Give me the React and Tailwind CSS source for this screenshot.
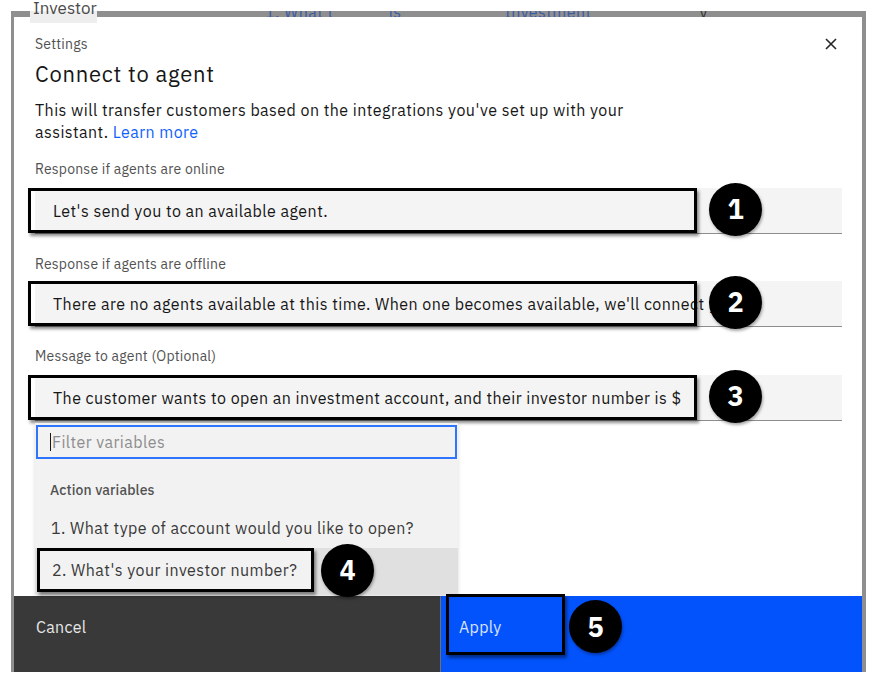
import React from "react";

const FONT = { fontFamily: '"IBM Plex Sans", "Liberation Sans", Arial, sans-serif' };

function Badge({ n, className }) {
  return (
    <div
      className={
        "absolute w-[53px] h-[53px] rounded-full bg-black text-white flex items-center justify-center text-[27px] font-bold tracking-normal shadow-[1px_2px_3px_rgba(0,0,0,0.35)] " +
        className
      }
    >
      {n}
    </div>
  );
}

function Field({ label, text, n, labelGap, topGap }) {
  return (
    <div className={topGap}>
      <div className="text-[14px] leading-[16px] tracking-[0.2px] text-[#525252]">{label}</div>
      <div className={"relative " + labelGap}>
        <div className="h-[46px] bg-[#f4f4f4] border-b border-[#8d8d8d] flex items-center pl-[18px] overflow-hidden whitespace-nowrap text-[16px] text-[#161616]">
          {text}
        </div>
        <div className="absolute left-[-7px] top-0 w-[669px] h-[45px] border-[3px] border-black shadow-[2px_3px_3px_rgba(0,0,0,0.45)]" />
        <Badge n={n} className="left-[674px] top-[-5px]" />
      </div>
    </div>
  );
}

export default function App() {
  return (
    <div className="relative w-[876px] h-[682px] bg-white overflow-hidden tracking-[0.45px]" style={FONT}>
      <div className="h-[11px]" />
      <div className="ml-[11px] w-[855px] h-[661px] bg-[#8f8f8f] pl-[3px] pr-[4px] flex flex-col">
        {/* faded page content behind the dialog */}
        <div className="h-[6px] overflow-hidden flex items-start text-[16px] leading-[20px] text-[#3b5ba5]">
          <span className="ml-[251px] mt-[-9px]">1. What t</span>
          <span className="ml-[55px] mt-[-9px]">is</span>
          <span className="ml-[103px] mt-[-9px]">Investment</span>
          <span className="ml-[108px] mt-[-9px] text-[#393939]">v</span>
        </div>
        <div className="flex-1 bg-white flex flex-col">
          {/* body */}
          <div className="h-[579px] pl-[21px] pr-[20px] relative">
            <div className="flex items-start justify-between mt-[18px]">
              <div className="text-[14px] leading-[18px] tracking-[0.2px] text-[#525252]">Settings</div>
              <svg width="14" height="14" viewBox="0 0 14 14" className="mt-[2px] mr-[4px]">
                <path d="M2 2 L12 12 M12 2 L2 12" stroke="#262626" strokeWidth="1.6" />
              </svg>
            </div>
            <div className="mt-[7px] text-[22px] leading-[28px] tracking-[0.75px] text-[#161616]">Connect to agent</div>
            <div className="mt-[11px] w-[620px] text-[16px] leading-[22px] text-[#161616]">
              This will transfer customers based on the integrations you've set up with your assistant.{" "}
              <span className="text-[#0f62fe]">Learn more</span>
            </div>

            <Field
              topGap="mt-[18px]"
              labelGap="mt-[11px]"
              label="Response if agents are online"
              text="Let's send you to an available agent."
              n="1"
            />
            <Field
              topGap="mt-[22px]"
              labelGap="mt-[9px]"
              label="Response if agents are offline"
              text="There are no agents available at this time. When one becomes available, we'll connect you."
              n="2"
            />
            <Field
              topGap="mt-[21px]"
              labelGap="mt-[11px]"
              label="Message to agent (Optional)"
              text="The customer wants to open an investment account, and their investor number is $"
              n="3"
            />

            {/* dropdown */}
            <div className="relative mt-[2px] w-[423px] bg-[#f2f2f2] shadow-[0_2px_4px_rgba(0,0,0,0.15)] z-10">
              <div className="mx-[1px] pt-[2px]">
                <div className="h-[34px] border-2 border-[#2f74ff] bg-[#f2f2f2] flex items-center pl-[12px]">
                  <span className="w-px h-[18px] bg-[#161616] mr-[1px]" />
                  <span className="text-[16px] text-[#8d8d8d]">Filter variables</span>
                </div>
              </div>
              <div className="mt-[23px] pl-[15px] text-[14px] leading-[16px] tracking-[0.1px] font-medium text-[#525252]">Action variables</div>
              <div className="mt-[19px] pl-[16px] text-[16px] leading-[22px] text-[#393939]">
                1. What type of account would you like to open?
              </div>
              <div className="relative mt-[9px] h-[46px] bg-[#e0e0e0]">
                <div className="absolute left-[2px] top-0 w-[277px] h-[44px] bg-[#f2f2f2] border-[3px] border-black shadow-[2px_3px_3px_rgba(0,0,0,0.45)] flex items-center pl-[12px] text-[16px] text-[#393939] whitespace-nowrap">
                  2. What's your investor number?
                </div>
                <Badge n="4" className="left-[286px] top-[-4px]" />
              </div>
            </div>
          </div>

          {/* footer */}
          <div className="flex h-[76px] mt-auto tracking-[0.3px]">
            <div className="w-[426px] bg-[#393939] pl-[22px] pt-[20px] text-[16px] leading-[22px] text-[#e8e8e8]">
              Cancel
            </div>
            <div className="relative flex-1 bg-[#0353fd] border-l border-[#6f6f6f] pl-[18px] pt-[20px] text-[16px] leading-[22px] text-[#dbe4ff]">
              Apply
              <div className="absolute left-[5px] top-[-2px] w-[119px] h-[61px] border-[3px] border-black shadow-[2px_3px_3px_rgba(0,0,0,0.45)]" />
              <Badge n="5" className="left-[128px] top-[4px]" />
            </div>
          </div>
        </div>
      </div>

      {/* "Investor" chip of the page behind, peeking over the dialog edge */}
      <div className="absolute left-[30px] top-[11px] w-[67px] h-[12px] bg-[#eeeeee]" />
      <div className="absolute left-[33px] top-[-4px] text-[17px] leading-[24px] tracking-normal text-[#4a4a4a] whitespace-nowrap">Investor</div>
    </div>
  );
}
